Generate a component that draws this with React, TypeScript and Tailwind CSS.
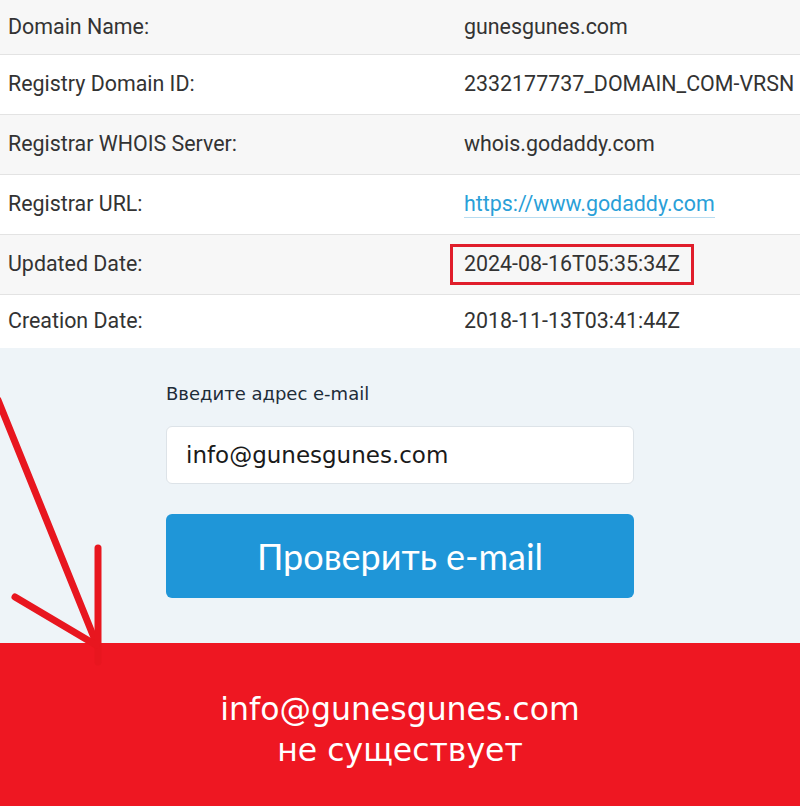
const rows: { label: string; value: string; link?: boolean; mark?: boolean }[] = [
  { label: "Domain Name:", value: "gunesgunes.com" },
  { label: "Registry Domain ID:", value: "2332177737_DOMAIN_COM-VRSN" },
  { label: "Registrar WHOIS Server:", value: "whois.godaddy.com" },
  { label: "Registrar URL:", value: "https://www.godaddy.com", link: true },
  { label: "Updated Date:", value: "2024-08-16T05:35:34Z", mark: true },
  { label: "Creation Date:", value: "2018-11-13T03:41:44Z" },
];

export default function App() {
  return (
    <div className="relative w-[800px] h-[806px] overflow-hidden bg-white">
      {/* whois table */}
      <div className="font-['Roboto',sans-serif] text-[21.4px] text-[#333]">
        {rows.map((r, i) => (
          <div
            key={r.label}
            className={
              "flex items-center border-b border-[#e3e3e3] " +
              (i === 0 ? "h-[55px] " : i === rows.length - 1 ? "h-[53px] border-b-0 " : "h-[60px] ") +
              (i % 2 === 0 ? "bg-[#f7f7f7]" : "bg-white")
            }
          >
            <div className="w-[464px] pl-2">{r.label}</div>
            <div className="flex-1">
              {r.link ? (
                <span className="text-[#2a9fd8] border-b border-[#b8dcf0] pb-[1px]">{r.value}</span>
              ) : r.mark ? (
                <span className="-ml-[14px] inline-block border-[3px] border-[#e01e2b] px-[11px] py-[1px]">
                  {r.value}
                </span>
              ) : (
                r.value
              )}
            </div>
          </div>
        ))}
      </div>

      {/* email check form */}
      <div className="h-[295px] bg-[#eef4f8] pt-[32px] font-['DejaVu_Sans',sans-serif]">
        <div className="mx-auto w-[468px]">
          <label htmlFor="email" className="block text-[18px] text-[#1d2c38] mb-[19px]">
            Введите адрес e-mail
          </label>
          <input
            id="email"
            type="text"
            defaultValue="info@gunesgunes.com"
            className="w-full h-[58px] rounded-[6px] border border-[#dde3e8] bg-white px-[19px] text-[23px] text-[#1a1a1a] outline-none"
          />
          <button className="mt-[30px] w-full h-[84px] rounded-[6px] bg-[#1f96d8] text-white text-[36px] font-['Lato',sans-serif]">
            Проверить e-mail
          </button>
        </div>
      </div>

      {/* result */}
      <div className="h-[163px] bg-[#ee1722] flex flex-col items-center justify-center font-['DejaVu_Sans',sans-serif] text-white text-[31.5px] leading-[41px] pt-[10px]">
        <div>info@gunesgunes.com</div>
        <div>не существует</div>
      </div>

      {/* hand-drawn arrow */}
      <svg className="absolute left-0 top-0 pointer-events-none" width="800" height="806">
        <g stroke="#e8161f" strokeWidth="7" strokeLinecap="round" fill="none">
          <line x1="-2" y1="400" x2="97" y2="645" />
          <line x1="98" y1="548" x2="98" y2="662" />
          <line x1="15" y1="597" x2="96" y2="645" />
        </g>
      </svg>
    </div>
  );
}
